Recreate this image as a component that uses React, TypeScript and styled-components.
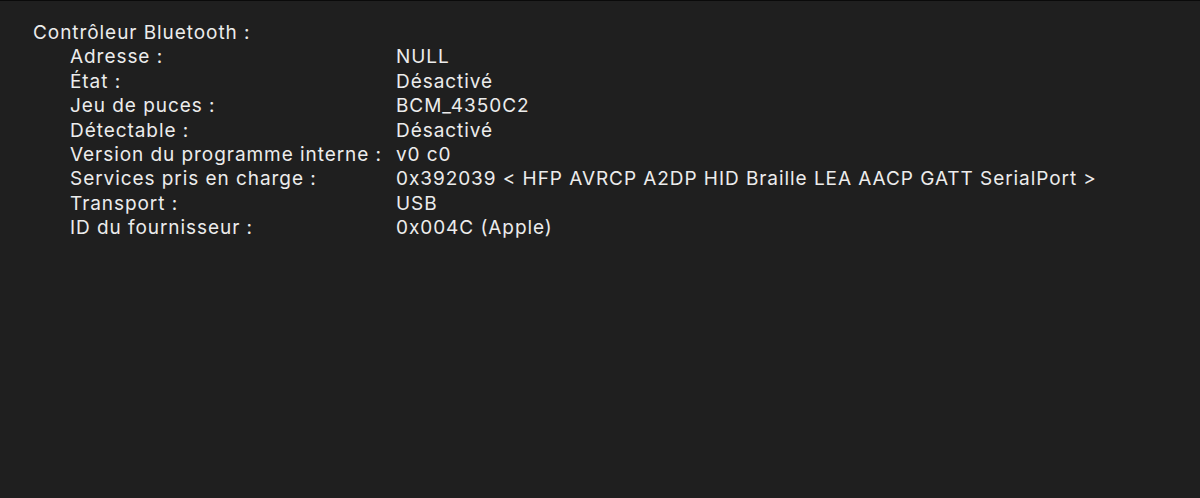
import React from 'react';
import styled, { createGlobalStyle } from 'styled-components';

const GlobalStyle = createGlobalStyle`
  html, body {
    margin: 0;
    padding: 0;
    background: #1f1f1f;
  }
`;

const rows: [string, string][] = [
  ['Adresse :', 'NULL'],
  ['État :', 'Désactivé'],
  ['Jeu de puces :', 'BCM_4350C2'],
  ['Détectable :', 'Désactivé'],
  ['Version du programme interne :', 'v0 c0'],
  ['Services pris en charge :', '0x392039 < HFP AVRCP A2DP HID Braille LEA AACP GATT SerialPort >'],
  ['Transport :', 'USB'],
  ['ID du fournisseur :', '0x004C (Apple)']
];

export default function App() {
  return (
    <>
      <GlobalStyle />
      <Window>
        <Section>
          <Title>Contrôleur Bluetooth :</Title>
          <Grid>
            {rows.map(([label, value]) => (
              <React.Fragment key={label}>
                <Label>{label}</Label>
                <Value>{value}</Value>
              </React.Fragment>
            ))}
          </Grid>
        </Section>
      </Window>
    </>
  );
}

const Window = styled.main`
  height: 498px;
  box-sizing: border-box;
  border-top: 1px solid #0a0a0a;
  background: #1f1f1f;
  color: #ececec;
  font-family: Inter, 'Noto Sans', sans-serif;
  font-size: 19px;
  letter-spacing: 0.94px;
`;

const Section = styled.section`
  padding: 20px 0 0 33px;
`;

const Title = styled.div`
  line-height: 24.4px;
`;

const Grid = styled.div`
  display: grid;
  grid-template-columns: 326px auto;
  padding-left: 37px;
  line-height: 24.4px;
`;

const Label = styled.div`
  white-space: nowrap;
`;

const Value = styled.div`
  white-space: nowrap;
`;
